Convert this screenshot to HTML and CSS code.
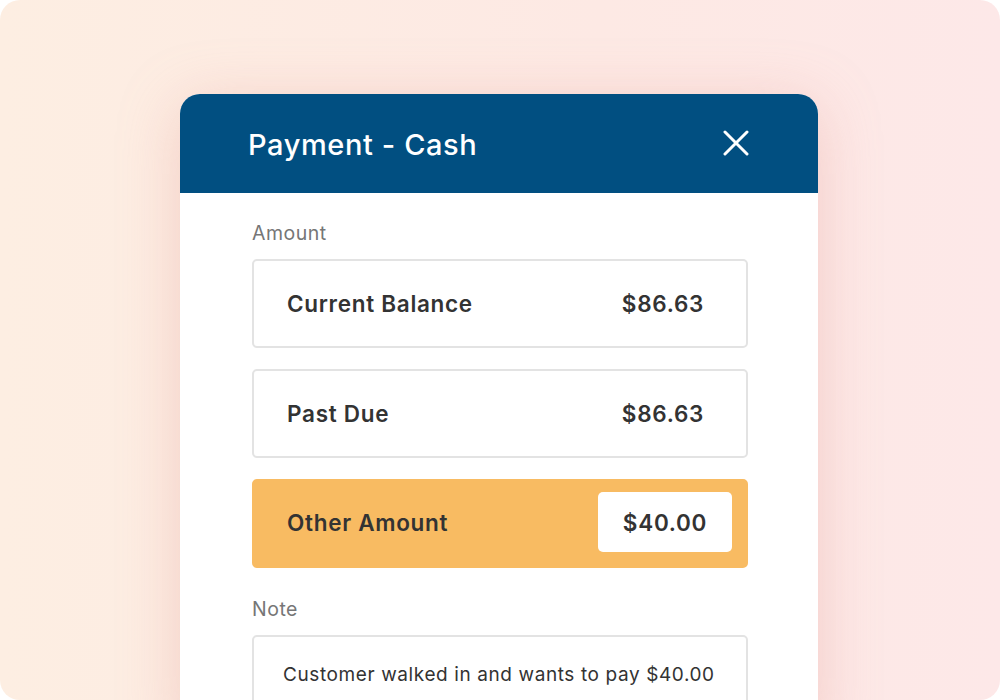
FILE: index.html
```html
<!DOCTYPE html>
<html>
<head>
<meta charset="utf-8">
<link rel="stylesheet" href="styles.css">
</head>
<body>
<div class="frame">
  <div class="card">
    <div class="card-header">
      <h1 class="title">Payment - Cash</h1>
      <svg class="close" width="26" height="26" viewBox="0 0 26 26"><path d="M2 2 L24 24 M24 2 L2 24" stroke="#fff" stroke-width="3" stroke-linecap="round" fill="none"/></svg>
    </div>
    <div class="card-body">
      <div class="label">Amount</div>
      <div class="option">
        <span class="opt-name">Current Balance</span>
        <span class="opt-value">$86.63</span>
      </div>
      <div class="option">
        <span class="opt-name">Past Due</span>
        <span class="opt-value">$86.63</span>
      </div>
      <div class="option selected">
        <span class="opt-name">Other Amount</span>
        <span class="opt-input">$40.00</span>
      </div>
      <div class="label note-label">Note</div>
      <div class="note">Customer walked in and wants to pay $40.00</div>
    </div>
  </div>
</div>
</body>
</html>
```

FILE: styles.css
```css
* { box-sizing: border-box; }
html, body { margin: 0; padding: 0; background: #ffffff; }
body { font-family: Inter, "Noto Sans", sans-serif; width: 1000px; height: 700px; overflow: hidden; }
.frame {
  width: 1000px;
  height: 700px;
  border-radius: 20px;
  overflow: hidden;
  background: linear-gradient(90deg, #fdeee2 0%, #fde9e4 60%, #fde8e8 100%);
  padding: 94px 0 0 180px;
}
.card {
  width: 638px;
  height: 640px;
  background: #fff;
  border-radius: 20px 20px 0 0;
  box-shadow: 0 10px 60px rgba(225, 150, 140, 0.35);
  overflow: hidden;
}
.card-header {
  height: 99px;
  background: #014f81;
  display: flex;
  align-items: center;
  justify-content: space-between;
  padding: 0 69px 0 68px;
}
.title {
  margin: 0;
  color: #fff;
  font-size: 29px;
  font-weight: 500;
  letter-spacing: 0.6px;
  margin-top: 2px;
}
.close { display: block; margin-top: -2px; }
.card-body { padding: 28px 70px 0 72px; }
.label {
  color: #767676;
  font-size: 19.5px;
  letter-spacing: 0.5px;
  line-height: 24px;
  margin-bottom: 14px;
}
.note-label { margin-top: 29px; margin-bottom: 14px; }
.option {
  height: 89px;
  border: 2px solid #e3e3e3;
  border-radius: 5px;
  display: flex;
  align-items: center;
  justify-content: space-between;
  padding: 0 42px 0 33px;
  margin-bottom: 21px;
  color: #333;
  font-size: 22.5px;
  font-weight: 600;
  letter-spacing: 0.7px;
}
.option.selected {
  background: #f8bb62;
  border-color: #f8bb62;
  padding-right: 14px;
  margin-bottom: 0;
}
.option.selected .opt-name { margin-top: -3px; }
.opt-input {
  background: #fff;
  border-radius: 5px;
  height: 60px;
  width: 134px;
  display: flex;
  align-items: center;
  justify-content: center;
  margin-top: -3px;
}
.note {
  height: 90px;
  border: 2px solid #e3e3e3;
  border-radius: 5px;
  padding: 26px 0 0 29px;
  color: #333;
  font-size: 19px;
  letter-spacing: 0.6px;
}
```
